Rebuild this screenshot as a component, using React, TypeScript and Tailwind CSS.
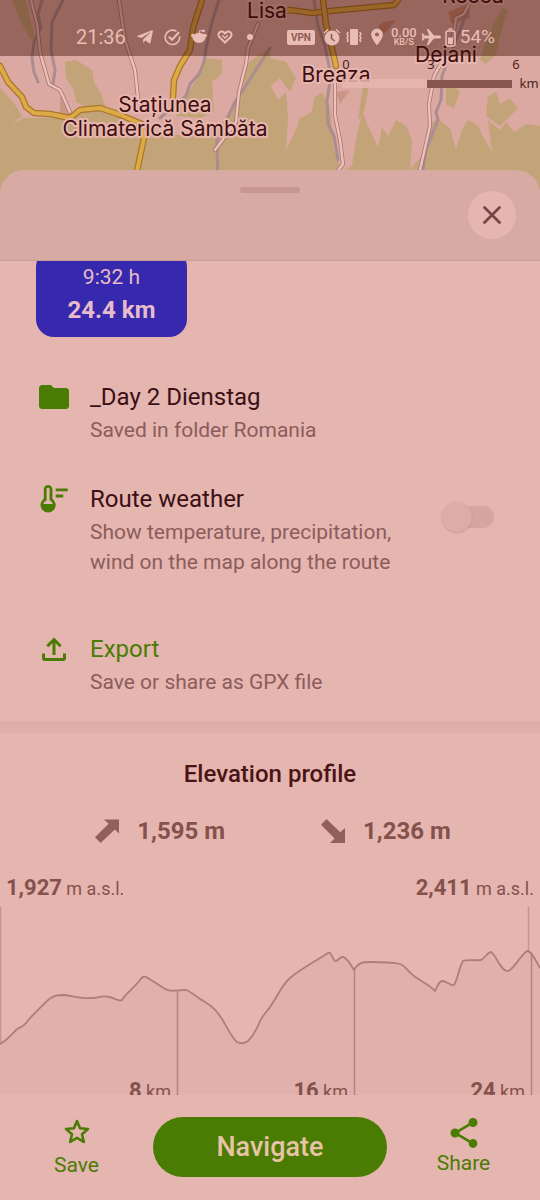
import React from 'react';
import { FaTelegramPlane } from 'react-icons/fa';
import { MdFolder, MdLocationOn, MdShare } from 'react-icons/md';

const MAP_LABELS = [
  { text: 'Recea', x: 473, y: 3 },
  { text: 'Lisa', x: 267, y: 18 },
  { text: 'Dejani', x: 446, y: 62 },
  { text: 'Breaza', x: 336, y: 82 },
  { text: 'Stațiunea', x: 165, y: 112 },
  { text: 'Climaterică Sâmbăta', x: 165, y: 136 },
];

const RIVERS = [
  'M42 0L38 14 41 28 34 42 32 58 34 72 38 82',
  'M63 0L52 22 51 50 55 70 53 84',
  'M219 0L212 22 206 48 204 62 199 74 190 84 186 96 160 118',
  'M270 48L252 76 234 104 217 140 218 190',
  'M314 0L318 26 325 46 331 76 327 100 328 124 334 136 338 160',
  'M468 10L456 40 442 76 441 100 436 112 438 120 426 150 420 190',
];

const WHITE_ROADS = [
  'M31 0L37 24 40 52 49 84 60 90 70 112',
  'M119 0L125 40 135 70 138 98',
  'M258 24L248 48 246 64 239 92 236 122 215 150',
  'M335 72L335 115 340 140 343 164 337 172',
  'M471 0L464 14 456 18 452 44 434 76 429 104 430 126 420 170 416 190',
];

const YELLOW_ROADS = [
  'M0 66L8 82 22 97 26 107 34 113 50 114 70 118 80 110 100 108 118 114 142 124 144 138 133 190',
  'M202 0L193 28 190 50 180 66 174 80 173 97',
  'M272 15L290 10 312 13 340 10 394 5 398 0',
  'M323 0L326 24 331 44 336 66',
];

const FORESTS = [
  'M0 88L8 96 16 106 22 116 12 124 24 118 36 118 66 118 80 112 110 110 130 126 160 134 196 136 226 120 234 100 244 96 250 106 262 86 270 84 278 100 286 92 288 118 286 150 294 134 300 118 312 112 314 98 322 92 330 108 334 150 342 172 352 166 356 140 362 112 370 130 378 148 382 128 388 136 396 120 406 126 412 140 410 170 426 150 430 124 438 118 444 124 450 128 456 150 462 130 468 120 478 126 484 138 492 152 488 120 500 130 506 122 514 132 526 124 540 126V190H0z',
  'M65 62L76 60 92 70 94 82 100 92 106 108 88 108 76 102 74 90 66 78z',
  'M206 58L222 60 222 74 212 82 213 98 214 112 200 118 176 116 186 96 194 84z',
  'M246 64L270 48V104L256 102 240 110z',
  'M12 0L26 0 30 20 36 40 30 38 22 24z',
  'M502 8L508 10 500 36 496 54 486 64 480 60 486 40z',
  'M270 58L286 62 296 78 290 92 280 78 270 86z',
  'M446 86L452 84 460 92 454 108 446 104z',
  'M365 78L369 86 364 112 358 120 362 92z',
  'M488 96L496 92 500 104 510 98 518 108 500 126 486 116z',
];

const STATUS = '#e9bdb6';

const MapView = () => (
  <svg
    className="absolute inset-0 w-full h-full"
    viewBox="0 0 540 190"
    preserveAspectRatio="xMidYMin slice"
    aria-label="Map"
  >
    <rect width="540" height="190" fill="#dba9a1" />
    {FORESTS.map((d) => (
      <path key={d} d={d} fill="#c3a378" />
    ))}
    <path d="M336 92L350 90 340 104zM60 96L72 114 60 116z" fill="#cd9586" />
    <path d="M448 12L468 4 470 18 452 24zM384 22L396 20 384 34 378 26z" fill="#cb8a70" />
    <g fill="none" strokeLinejoin="round" strokeLinecap="round">
      {RIVERS.map((d) => (
        <path key={d} d={d} stroke="#ab8c90" strokeWidth="3" />
      ))}
      {WHITE_ROADS.map((d) => (
        <g key={d}>
          <path d={d} stroke="#a87572" strokeWidth="4" />
          <path d={d} stroke="#eec2ba" strokeWidth="2.4" />
        </g>
      ))}
      {YELLOW_ROADS.map((d) => (
        <g key={d}>
          <path d={d} stroke="#a8782c" strokeWidth="6.5" />
          <path d={d} stroke="#deaa46" strokeWidth="4" />
        </g>
      ))}
    </g>
    <g
      className="font-['Inter','Noto_Sans',sans-serif] text-[21px]"
      fill="#3f0d10"
      stroke="#e6b6ae"
      strokeWidth="4"
      strokeLinejoin="round"
      paintOrder="stroke"
      textAnchor="middle"
    >
      {MAP_LABELS.map((l) => (
        <text key={l.text} x={l.x} y={l.y}>
          {l.text}
        </text>
      ))}
    </g>
    <rect x="342" y="79" width="85" height="9" fill="#e6b6ae" opacity="0.85" />
    <rect x="427" y="80" width="85" height="8" fill="#8a554f" />
    <g className="font-['Noto_Sans',sans-serif] text-[13px]" fill="#4d1f20" textAnchor="middle">
      <text x="346" y="69">0</text>
      <text x="431" y="69">3</text>
      <text x="516" y="69">6</text>
      <text x="529" y="88">km</text>
    </g>
  </svg>
);

const StatusBar = () => (
  <div className="relative flex items-center h-14 pt-[18px] pl-[76px] pr-[45px] bg-[#3c0a006b] text-[#e9bdb6]">
    <span className="text-xl leading-6 w-[60px]">21:36</span>
    <div className="flex items-center gap-2.5">
      <FaTelegramPlane size={18} />
      <svg width="17" height="17" viewBox="0 0 17 17" fill="none" stroke={STATUS} strokeWidth="1.6">
        <path d="M12.5 2.4A7.2 7.2 0 1 0 15.6 7.4" />
        <path d="M4.8 7.6l3.2 3.2 7-7.6" strokeWidth="2" />
      </svg>
      <svg width="16" height="16" viewBox="0 0 16 16" fill={STATUS}>
        <path d="M1.6 8.6C1.6 5.6 4.4 4 8 4s6.4 1.6 6.4 4.6S11.6 14 8 14 1.6 11.6 1.6 8.6z" />
        <circle cx="1.9" cy="6.6" r="1.8" />
        <circle cx="14.1" cy="6.6" r="1.8" />
        <circle cx="12.6" cy="1.9" r="1.4" />
        <path d="M8 5l.8-3.4 3.6.6" fill="none" stroke={STATUS} />
      </svg>
      <svg width="16" height="16" viewBox="0 0 16 16" fill="none" stroke={STATUS} strokeWidth="2">
        <path d="M8 13.5L2.4 8A3.2 3.2 0 0 1 7 3.5L8 4.5l1-1A3.2 3.2 0 0 1 13.6 8z" />
        <path d="M5.2 6.2l2.8 2.8 2.8-2.8" strokeWidth="1.4" />
      </svg>
      <span className="w-1.5 h-1.5 ml-1 rounded-full bg-[#e9bdb6]" />
    </div>
    <div className="flex items-center gap-1 ml-auto">
      <span className="px-1 mr-1 rounded-xs bg-[#e9bdb6] text-[10px] leading-[15px] font-bold text-[#8c5b50]">
        VPN
      </span>
      <svg width="18" height="18" viewBox="0 0 18 18" fill="none" stroke={STATUS} strokeWidth="1.6">
        <circle cx="9" cy="10" r="7.5" fill={STATUS} stroke="none" />
        <path d="M1 5l4-3.5M17 5l-4-3.5" />
        <path d="M8.5 6v4.5l3 2.5" stroke="#8c5b50" />
      </svg>
      <svg width="18" height="16" viewBox="0 0 18 16" fill="none" stroke={STATUS} strokeWidth="1.5">
        <rect x="5" y="0" width="8" height="16" rx="1" fill={STATUS} stroke="none" />
        <path d="M3.2 3L2 5l1.2 2L2 9l1.2 2L2 13M14.8 3L16 5l-1.2 2L16 9l-1.2 2L16 13" />
      </svg>
      <MdLocationOn size={20} />
      <div className="flex flex-col items-center text-[9px] leading-[9px] font-medium">
        <span className="text-[13px] leading-[11px]">0.00</span>
        <span>KB/S</span>
      </div>
      <svg width="20" height="18" viewBox="0 0 20 18" fill={STATUS}>
        <path d="M20 9c0-.9-.7-1.5-1.6-1.5H13L7.500 1H5.700l2.600 6.500H3.500L2 5.500H.6L1.500 9 .6 12.500H2l1.500-2h4.800L5.700 17h1.800L13 10.500h5.400c.9 0 1.600-.6 1.600-1.500z" />
      </svg>
      <svg width="11" height="19" viewBox="0 0 11 19" fill="none" stroke={STATUS} strokeWidth="1.5">
        <rect x="1" y="3" width="9" height="15" rx="2" />
        <path d="M3.5 1h4" />
        <rect x="3" y="9.5" width="5" height="6.5" fill={STATUS} stroke="none" />
      </svg>
      <span className="text-[19px] leading-6">54%</span>
    </div>
  </div>
);

const ThermometerIcon = () => (
  <svg className="flex-none w-9 h-9" viewBox="0 0 36 36" fill="none" stroke="#4a7c04" strokeWidth="2.8">
    <path d="M9.2 18.5V8.3a2.9 2.9 0 0 1 5.8 0v10.2a6.2 6.2 0 1 1-5.8 0z" />
    <path d="M5.5 23h13a6.5 6.5 0 0 1-13 1z" fill="#4a7c04" stroke="none" />
    <path d="M19.7 8.8h12M19.7 15h7.5" />
  </svg>
);

const ExportIcon = () => (
  <svg className="flex-none w-9 h-9" viewBox="0 0 36 36" fill="none" stroke="#4a7c04" strokeWidth="3">
    <path d="M18 24V9M11.3 15.2L18 8.5l6.7 6.7" />
    <path d="M7.5 22.5V27a1.5 1.5 0 0 0 1.5 1.5h18a1.5 1.5 0 0 0 1.5-1.5v-4.5" />
  </svg>
);

interface RowProps {
  icon: React.ReactNode;
  title: React.ReactNode;
  children: React.ReactNode;
}

const Row = (props: RowProps) => {
  const { icon, title, children } = props;
  return (
    <div className="flex flex-1 gap-[18px]">
      <div className="flex-none -mt-[3px] text-[#4a7c04]">{icon}</div>
      <div className="flex flex-col gap-[3px]">
        <div className="text-2xl leading-[30px]">{title}</div>
        <p className="text-[21px] leading-[30px] text-[#8c5c5c]">{children}</p>
      </div>
    </div>
  );
};

const LINE =
  'M0 139C6 136 11 130 16 125C19 122 22 123 26 118C32 110 39 104 47 96C52 91 56 90 64 90C74 91 82 94 92 93C98 93 103 90 109 92C115 93 119 97 122 95C126 88 134 83 140 75C143 71 144 71 148 73L162 82C170 88 174 85 186 85C192 87 196 92 205 97C214 102 218 108 222 114C228 124 232 133 237 137C241 139 244 139 248 136C252 132 257 124 260 116C264 108 268 106 272 99C278 90 282 80 290 73C302 63 316 56 328 48C332 46 332 56 336 56C340 54 341 50 345 53C349 56 351 60 354 65C358 58 362 57 370 57C382 57 392 57 400 59C406 61 408 67 414 71C422 77 430 80 435 86C437 82 439 76 442 76C447 76 450 81 454 80C458 74 459 62 463 56C468 54 474 56 481 55C486 52 488 47 491 47C496 49 500 66 508 66C514 64 520 51 527 46C532 46 536 56 540 63';

const TICKS = [
  { km: 8, x: 177, y: 86 },
  { km: 16, x: 354, y: 65 },
  { km: 24, x: 531, y: 50 },
];

const ElevationChart = () => (
  <svg className="block w-full" viewBox="0 0 540 190" fill="none" aria-label="Elevation profile chart">
    <path d={`${LINE}V190H0z`} fill="#e0b0aa" />
    <path d="M.5 2V139M528.5 2V46" stroke="#c49590" strokeWidth="1.5" />
    {TICKS.map((t) => (
      <path key={t.km} d={`M${t.x + 0.5} ${t.y}V190`} stroke="#b3837e" strokeWidth="1.5" />
    ))}
    <path d={LINE} stroke="#b07d78" strokeWidth="1.8" strokeLinejoin="round" />
    {TICKS.map((t) => (
      <text key={t.km} x={t.x - 6} y="193" textAnchor="end" fill="#85514c" className="text-lg">
        <tspan className="text-[22px] font-bold">{t.km}</tspan> km
      </text>
    ))}
  </svg>
);

const App = () => {
  return (
    <div className="flex flex-col min-h-screen bg-[#e5b5af] font-['Roboto',sans-serif] text-[#3b1015]">
      <header className="relative h-[190px] overflow-hidden">
        <MapView />
        <StatusBar />
      </header>

      <main className="relative flex-1 -mt-5">
        <div className="grid grid-cols-[1fr_60px_1fr] items-start px-6 border-b border-[#cc9c97] rounded-t-3xl bg-[#d8aaa4]">
          <span />
          <span className="h-1.5 mt-[17px] rounded-full bg-[#c69693]" />
          <button
            type="button"
            aria-label="Close"
            className="flex items-center justify-center w-12 h-12 my-[21px] rounded-full justify-self-end bg-[#e5b5af]"
          >
            <svg width="18" height="18" viewBox="0 0 18 18" stroke="#754647" strokeWidth="2.8" strokeLinecap="round">
              <path d="M1.5 1.5l15 15M16.5 1.5l-15 15" />
            </svg>
          </button>
        </div>

        <section className="px-9 pb-6 overflow-hidden">
          <div className="flex flex-col items-center w-[151px] gap-px pb-[11px] pt-3 -mt-3 rounded-[18px] bg-[#3629ad] text-[#e8bccb]">
            <span className="text-[21px] leading-8">9:32 h</span>
            <span className="text-2xl leading-8 font-bold">24.4 km</span>
          </div>

          <div className="flex mt-[45px]">
            <Row icon={<MdFolder size={36} />} title="_Day 2 Dienstag">
              Saved in folder Romania
            </Row>
          </div>

          <div className="flex items-start justify-between mt-[39px]">
            <Row icon={<ThermometerIcon />} title={<label htmlFor="weather">Route weather</label>}>
              Show temperature, precipitation,
              <br />
              wind on the map along the route
            </Row>
            <input
              id="weather"
              type="checkbox"
              role="switch"
              className="relative flex-none appearance-none w-12 h-[22px] mt-[22px] mr-2.5 rounded-full bg-[#d6a5a0] before:absolute before:-left-1 before:-top-1 before:w-[30px] before:h-[30px] before:rounded-full before:bg-[#dcaca7] before:shadow-sm checked:before:left-6"
            />
          </div>

          <div className="flex mt-[57px]">
            <Row
              icon={<ExportIcon />}
              title={
                <button type="button" className="block text-[#4a7c04]">
                  Export
                </button>
              }
            >
              Save or share as GPX file
            </Row>
          </div>
        </section>

        <div className="h-3 bg-[#dfaea8]" />

        <section className="pt-[26px] text-[#85514c]">
          <h2 className="text-2xl leading-[30px] font-medium text-center text-[#4a1414]">Elevation profile</h2>
          <div className="flex justify-center gap-[90px] mt-[27px] text-2xl leading-[30px] font-bold">
            <div className="flex items-center gap-3">
              <svg className="w-9 h-6" viewBox="0 0 24 24" fill="#935f5a">
                <path d="M9 .5H24V14.5L19.8 10.6 5.6 24 0 18.3 13.6 4.8z" />
              </svg>
              1,595 m
            </div>
            <div className="flex items-center gap-3">
              <svg className="w-9 h-6" viewBox="0 0 24 24" fill="#935f5a">
                <path d="M5.5 0L19.3 13.2 24 9V24H9L13.6 19.4 0 5.8z" />
              </svg>
              1,236 m
            </div>
          </div>
          <div className="flex justify-between px-1.5 mt-[27px] mb-px text-lg leading-[30px]">
            <span>
              <b className="text-[22px]">1,927</b> m a.s.l.
            </span>
            <span>
              <b className="text-[22px]">2,411</b> m a.s.l.
            </span>
          </div>
          <ElevationChart />
        </section>
      </main>

      <footer className="sticky bottom-0 flex items-start pt-5 pb-[23px] bg-[#e5b5af] text-[21px] leading-6 text-[#4a7c04]">
        <button type="button" className="flex flex-col items-center gap-1.5 w-[153px]">
          <svg width="32" height="32" viewBox="0 0 32 32" fill="none" stroke="currentColor" strokeWidth="2.6">
            <path d="M16 6l3 7.300 8 .7-6 5.200 1.800 7.800L16 22.900 9.200 27 11 19.200 5 14l8-.7z" strokeLinejoin="round" />
          </svg>
          Save
        </button>
        <button
          type="button"
          className="flex-1 mt-0.5 h-15 rounded-full bg-[#4a7c04] text-[27px] font-medium text-[#e8c3a6]"
        >
          Navigate
        </button>
        <button type="button" className="flex flex-col items-center w-[153px]">
          <MdShare size={36} />
          Share
        </button>
      </footer>
    </div>
  );
};

export default App;
